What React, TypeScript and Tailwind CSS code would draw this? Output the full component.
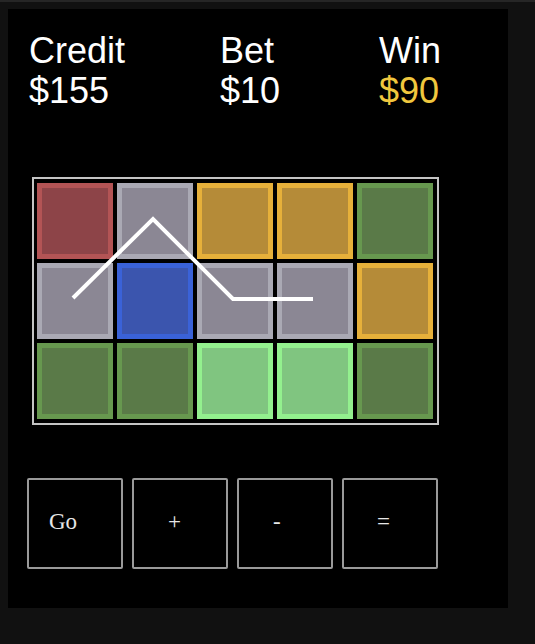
import React from "react";

// Цвета ячеек: рамка + заливка
type CellKind = "red" | "gray" | "gold" | "green" | "blue" | "lime";

const CELL_STYLES: Record<CellKind, string> = {
  red: "border-[#b35455] bg-[#8d4448]",
  gray: "border-[#aaa9b4] bg-[#8b8794]",
  gold: "border-[#e6b03a] bg-[#b58b38]",
  green: "border-[#67984f] bg-[#5a7a48]",
  blue: "border-[#3a62d8] bg-[#3b55ae]",
  lime: "border-[#93f08e] bg-[#80c580]",
};

const REELS: CellKind[][] = [
  ["red", "gray", "gold", "gold", "green"],
  ["gray", "blue", "gray", "gray", "gold"],
  ["green", "green", "lime", "lime", "green"],
];

const STATS = [
  { label: "Credit", value: "$155", width: "w-[191px]", valueColor: "text-white" },
  { label: "Bet", value: "$10", width: "w-[159px]", valueColor: "text-white" },
  { label: "Win", value: "$90", width: "w-auto", valueColor: "text-[#f0c73e]" },
];

const BUTTONS = [
  { label: "Go", pad: "pl-[20px]" },
  { label: "+", pad: "pl-[34px]" },
  { label: "-", pad: "pl-[34px]" },
  { label: "=", pad: "pl-[33px]" },
];

export default function App() {
  return (
    <div className="min-h-[644px] w-[535px] bg-[#111111] border-t-2 border-[#262626] pt-[7px] pl-[8px]">
      <div className="w-[500px] h-[599px] bg-black pt-[22px] pl-[21px]">
        {/* Счёт */}
        <div className="flex font-['Liberation_Sans',Arial,sans-serif] text-[36px] leading-[40px]">
          {STATS.map((s) => (
            <div key={s.label} className={s.width}>
              <div className="text-white">{s.label}</div>
              <div className={s.valueColor}>{s.value}</div>
            </div>
          ))}
        </div>

        {/* Барабаны */}
        <div className="relative mt-[66px] ml-[3px] w-[407px] border-2 border-[#c4c4c4] pt-[4px] pl-[3px] pr-[4px] pb-[4px]">
          <div className="flex flex-col gap-[4px]">
            {REELS.map((row, r) => (
              <div key={r} className="flex gap-[4px]">
                {row.map((kind, c) => (
                  <div
                    key={c}
                    className={`w-[76px] h-[76px] border-[5px] ${CELL_STYLES[kind]}`}
                  />
                ))}
              </div>
            ))}
          </div>
          <svg
            className="absolute left-0 top-0 pointer-events-none"
            width="403"
            height="244"
            viewBox="0 0 403 244"
          >
            <polyline
              points="39,119 119,40 199,120 279,120"
              fill="none"
              stroke="#ffffff"
              strokeWidth="4"
            />
          </svg>
        </div>

        {/* Кнопки */}
        <div className="flex gap-[9px] mt-[53px] -ml-[2px]">
          {BUTTONS.map((b) => (
            <button
              key={b.label}
              className={`w-[96px] h-[91px] border-2 border-[#9a9a9a] rounded-[2px] bg-black text-left text-[#e6e6e6] text-[23px] leading-none pb-[4px] font-['Liberation_Serif','Times_New_Roman',serif] ${b.pad}`}
            >
              {b.label}
            </button>
          ))}
        </div>
      </div>
    </div>
  );
}
